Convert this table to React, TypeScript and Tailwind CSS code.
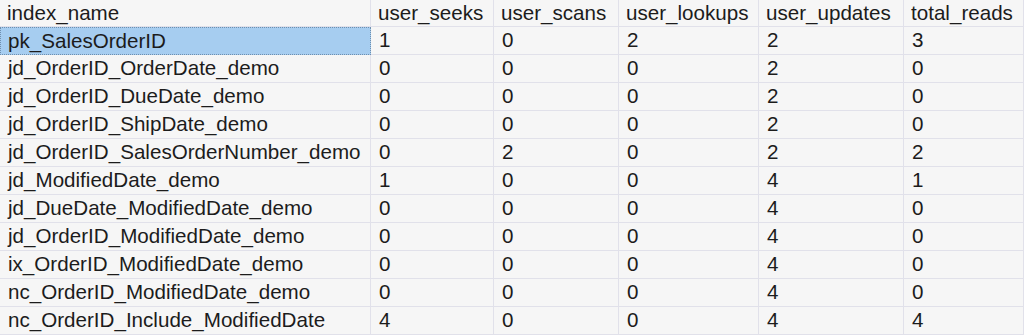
import React from "react";

const headers = ["index_name", "user_seeks", "user_scans", "user_lookups", "user_updates", "total_reads"];
const rows: (string | number)[][] = [
  ["pk_SalesOrderID", 1, 0, 2, 2, 3],
  ["jd_OrderID_OrderDate_demo", 0, 0, 0, 2, 0],
  ["jd_OrderID_DueDate_demo", 0, 0, 0, 2, 0],
  ["jd_OrderID_ShipDate_demo", 0, 0, 0, 2, 0],
  ["jd_OrderID_SalesOrderNumber_demo", 0, 2, 0, 2, 2],
  ["jd_ModifiedDate_demo", 1, 0, 0, 4, 1],
  ["jd_DueDate_ModifiedDate_demo", 0, 0, 0, 4, 0],
  ["jd_OrderID_ModifiedDate_demo", 0, 0, 0, 4, 0],
  ["ix_OrderID_ModifiedDate_demo", 0, 0, 0, 4, 0],
  ["nc_OrderID_ModifiedDate_demo", 0, 0, 0, 4, 0],
  ["nc_OrderID_Include_ModifiedDate", 4, 0, 0, 4, 4],
];

export default function App() {
  return (
    <div
      className="w-[1024px] h-[335px] overflow-hidden bg-[#f6f6f6] text-[#1c1c1c] text-[20.6px]"
      style={{ fontFamily: '"Liberation Sans", Arial, sans-serif' }}
    >
      <div className="grid grid-cols-[371px_123px_125px_140px_145px_120px]">
        {headers.map((h) => (
          <div
            key={h}
            className="h-[27px] flex items-center pl-[7px] border-b border-r border-[#e1e1ea] leading-none whitespace-nowrap"
          >
            {h}
          </div>
        ))}
        {rows.map((r, ri) =>
          r.map((v, ci) => {
            const selected = ri === 0 && ci === 0;
            return (
              <div
                key={`${ri}-${ci}`}
                className={`h-[28px] flex items-center leading-none whitespace-nowrap ${
                  selected
                    ? "bg-[#a6cdf0] border border-dotted border-[#6f8fae] pl-[7px]"
                    : "border-b border-r border-[#e1e1ea] pl-[8px]"
                }`}
              >
                {v}
              </div>
            );
          })
        )}
      </div>
    </div>
  );
}
